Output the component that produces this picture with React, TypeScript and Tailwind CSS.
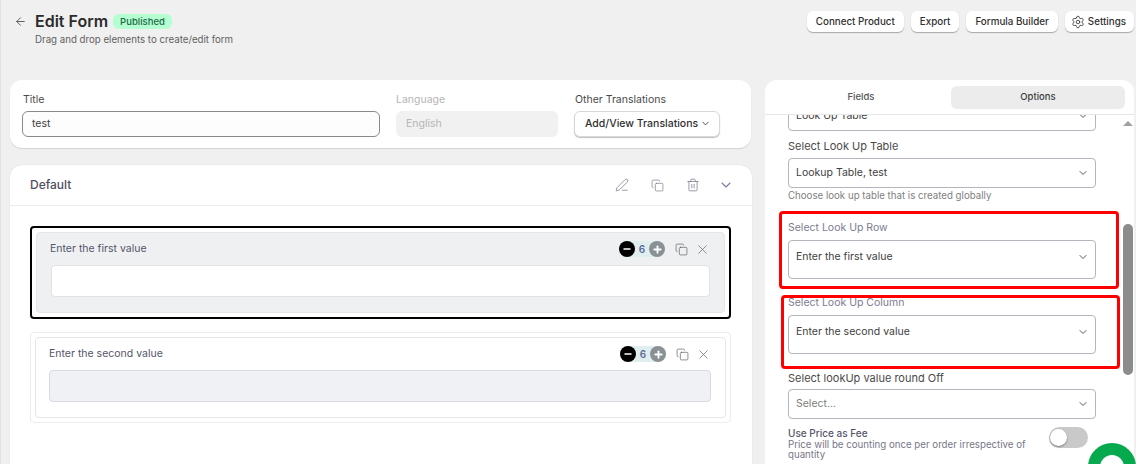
import { ArrowLeft, ChevronDown, Copy, Minus, PenLine, Plus, Settings, Trash2, X } from "lucide-react";

const font = "font-['Inter',sans-serif]";

function TopButton({ label, icon }: { label: string; icon?: boolean }) {
  return (
    <button
      className={`flex h-[21px] items-center gap-[3px] rounded-md bg-white pt-px text-[9.8px] font-medium text-[#303030] shadow-[0_1px_1px_rgba(0,0,0,0.3)] ${
        icon ? "pl-[6px] pr-[8px]" : "px-[9px]"
      }`}
    >
      {icon && <Settings size={14} strokeWidth={1.4} />}
      {label}
    </button>
  );
}

function Select({ value, tall, muted }: { value: string; tall?: boolean; muted?: boolean }) {
  return (
    <div
      className={`flex w-[308px] justify-between rounded border border-[#b5b5bd] bg-white pl-[7px] pr-[6px] text-[10.5px] ${
        tall ? "h-[39px] pt-[8px]" : "h-[30px] items-center"
      } ${muted ? "text-[#7d7d7d]" : "text-[#404040]"}`}
    >
      <span>{value}</span>
      <ChevronDown size={12} className={`text-[#55556a] ${tall ? "mt-[2px]" : ""}`} />
    </div>
  );
}

function Stepper() {
  return (
    <div className="flex h-4 items-center rounded-full bg-[#e1eef0]">
      <span className="flex h-4 w-4 items-center justify-center rounded-full bg-black">
        <Minus size={10} strokeWidth={4} className="text-white" />
      </span>
      <span className="w-[14px] text-center text-[10px] font-semibold text-[#5a6a9a]">6</span>
      <span className="flex h-4 w-4 items-center justify-center rounded-full bg-[#8a9194]">
        <Plus size={11} strokeWidth={4} className="text-white" />
      </span>
    </div>
  );
}

function FieldCard({ label, selected }: { label: string; selected?: boolean }) {
  return (
    <div className={`rounded p-[4px] ${selected ? "border-2 border-black" : "border border-[#ececec]"}`}>
      <div
        className={`rounded border border-[#e6e6e6] pb-[15px] pr-[14px] pt-2 ${
          selected ? "bg-[#eff0f2] pl-[14px]" : "bg-white pl-[13px]"
        }`}
      >
        <div className="flex h-4 items-center justify-between">
          <span className={`text-[10.5px] text-[#55556a] ${selected ? "-ml-px" : ""}`}>{label}</span>
          <div className="flex items-center">
            <Stepper />
            <Copy size={13} strokeWidth={1.2} className="ml-[10px] text-[#555]" />
            <X size={15} strokeWidth={1} className="ml-[7px] text-[#555]" />
          </div>
        </div>
        <div
          className={`mt-2 h-8 rounded-sm border ${
            selected ? "border-[#e2e2e6] bg-white" : "border-[#d9d9e2] bg-[#f0f1f5]"
          }`}
        />
      </div>
    </div>
  );
}

export default function App() {
  return (
    <div className={`relative h-[464px] w-[1136px] overflow-hidden border-l border-[#e0e0e0] bg-[#f0f0f0] ${font}`}>
      <header className="flex h-[80px] justify-between pl-[13px] pr-[2px] pt-[11px]">
        <div className="flex">
          <ArrowLeft size={13} strokeWidth={1.5} className="mt-[4px] text-[#444]" />
          <div className="ml-[8px]">
            <div className="flex items-center gap-[5px]">
              <h1 className="text-[16px] font-semibold leading-[20px] text-[#2b2b2b]">Edit Form</h1>
              <span className="rounded-md bg-[#b4fed2] px-[7px] py-[1px] text-[9.5px] font-medium leading-[13px] text-[#1a6a45]">
                Published
              </span>
            </div>
            <p className="mt-[2px] text-[9.7px] leading-[13px] text-[#616161]">Drag and drop elements to create/edit form</p>
          </div>
        </div>
        <div className="flex gap-[7px]">
          <TopButton label="Connect Product" />
          <TopButton label="Export" />
          <TopButton label="Formula Builder" />
          <TopButton label="Settings" icon />
        </div>
      </header>

      <div className="flex pl-[9px]">
        <main className="w-[742px]">
          <section className="flex h-[68px] w-[741px] items-start gap-[16px] rounded-xl bg-white pl-[12px] pt-[12px] shadow-[0_1px_1px_rgba(0,0,0,0.12)]">
            <label className="w-[358px] text-[10.5px] text-[#4a4a4a]">
              <span className="ml-px">Title</span>
              <div className="mt-[3px] flex h-[26px] items-center rounded-md border border-[#8a8a8a] bg-[#fdfdfd] pl-[9px] text-[10.5px] text-[#404040]">
                test
              </div>
            </label>
            <label className="w-[162px] text-[10.5px] text-[#b5b5b5]">
              Language
              <div className="mt-[3px] flex h-[26px] items-center rounded-md bg-[#f1f1f1] pl-[10px]">English</div>
            </label>
            <label className="text-[10.5px] text-[#4a4a4a]">
              <span className="ml-px">Other Translations</span>
              <div className="mt-[3px] flex h-[26px] w-[146px] items-center justify-between rounded-md border border-[#d8d8d8] bg-white pl-[10px] pr-[8px] text-[10.5px] font-medium text-[#303030] shadow-[0_1px_1px_rgba(0,0,0,0.25)]">
                Add/View Translations
                <ChevronDown size={11} className="text-[#444]" />
              </div>
            </label>
          </section>

          <section className="mt-[17px] h-[320px] w-[742px] rounded-t-xl bg-white shadow-[0_0_1px_rgba(0,0,0,0.2)]">
            <div className="flex h-[41px] items-center justify-between border-b border-[#ececec] pl-[20px] pr-[18px]">
              <span className="text-[12px] font-medium text-[#505060]">Default</span>
              <div className="flex items-center gap-[22px] text-[#7a7a8c]">
                <PenLine size={14} strokeWidth={1.3} />
                <Copy size={13} strokeWidth={1.3} />
                <Trash2 size={14} strokeWidth={1.3} />
                <ChevronDown size={16} strokeWidth={1.6} className="-ml-[4px] text-[#7a7a9c]" />
              </div>
            </div>
            <div className="flex flex-col gap-[13px] pl-[20px] pr-[21px] pt-[20px]">
              <FieldCard label="Enter the first value" selected />
              <FieldCard label="Enter the second value" />
            </div>
          </section>
        </main>

        <aside className="ml-[13px] flex h-[384px] w-[369px] flex-col rounded-t-xl bg-white">
          <div className="flex h-[35px] shrink-0 items-center border-b border-[#e6e6e6] pt-[1px]">
            <div className="w-[186px] pl-[6px] text-center text-[9.5px] font-medium text-[#555]">Fields</div>
            <div className="flex h-[23px] w-[174px] items-center justify-center rounded-md bg-[#ececec] text-[9.5px] font-medium text-[#404040]">
              Options
            </div>
          </div>
          <div className="h-[349px] overflow-hidden pl-[23px] text-[11px]">
            <div className="-mt-[14px]">
              <Select value="Look Up Table" />
            </div>
            <p className="mt-[7px] leading-[16px] text-[#4a4a4a]">Select Look Up Table</p>
            <div className="mt-[4px]">
              <Select value="Lookup Table, test" />
            </div>
            <p className="mt-[1px] text-[9.7px] leading-[13px] text-[#808080]">Choose look up table that is created globally</p>
            <div className="-ml-[9px] mt-[9px] h-[78px] w-[340px] rounded-sm border-[3px] border-[#ff0000] pl-[6px] pt-[7px]">
              <p className="text-[10.5px] leading-[14px] text-[#7c7c90]">Select Look Up Row</p>
              <div className="mt-[5px]">
                <Select value="Enter the first value" tall />
              </div>
            </div>
            <div className="-ml-[7px] mt-[6px] h-[74px] w-[339px] rounded-sm border-[3px] border-[#ff0000] pl-[4px]">
              <p className="-mt-[2px] text-[10.5px] leading-[13px] text-[#7c7c90]">Select Look Up Column</p>
              <div className="mt-[6px]">
                <Select value="Enter the second value" tall />
              </div>
            </div>
            <p className="mt-[1px] leading-[16px] text-[#4a4a4a]">Select lookUp value round Off</p>
            <div className="mt-[3px]">
              <Select value="Select..." muted />
            </div>
            <div className="mt-[8px] flex w-[300px] items-start justify-between">
              <div className="w-[248px]">
                <p className="text-[10px] font-medium leading-[13px] text-[#55556a]">Use Price as Fee</p>
                <p className="text-[9.7px] leading-[10px] text-[#777788]">
                  Price will be counting once per order irrespective of quantity
                </p>
              </div>
              <div className="flex h-[21px] w-[39px] items-center rounded-full bg-[#c9c9c9]">
                <span className="ml-[1px] h-[17px] w-[17px] rounded-full bg-white shadow-[0_1px_2px_rgba(0,0,0,0.4)]" />
              </div>
            </div>
          </div>
        </aside>
      </div>

      {/* scrollbar */}
      <div className="absolute left-[1122px] top-[121px] h-0 w-0 border-x-[5px] border-b-[5px] border-x-transparent border-b-[#a0a0a0]" />
      <div className="absolute left-[1122px] top-[224px] h-[151px] w-[10px] rounded-full bg-[#8c8c8c]" />
      {/* chat bubble */}
      <div className="absolute left-[1087px] top-[443px] h-[48px] w-[48px] rounded-full border-[12px] border-[#06a94d] bg-white" />
    </div>
  );
}
